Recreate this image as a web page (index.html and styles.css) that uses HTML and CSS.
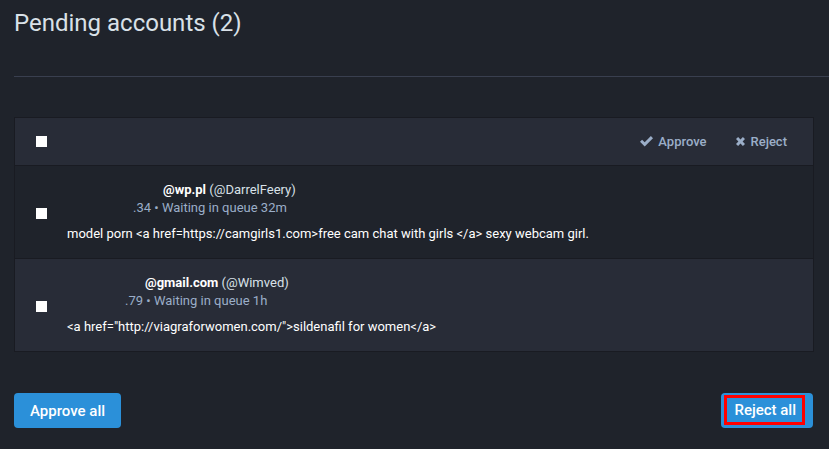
FILE: index.html
```html
<!DOCTYPE html>
<html>
<head>
<meta charset="utf-8">
<link rel="stylesheet" href="styles.css">
</head>
<body>
<div class="page">
  <h2 class="title">Pending accounts (2)</h2>
  <hr class="divider">
  <div class="batch">
    <div class="toolbar">
      <span class="check"></span>
      <div class="actions">
        <span class="action"><svg class="ico" viewBox="0 0 13 11" width="13" height="11"><path d="M0 5.8 L2.1 3.7 L4.7 6.3 L10.9 0.1 L13 2.2 L4.7 10.5 Z" fill="currentColor"/></svg>Approve</span>
        <span class="action"><svg class="ico ico-x" viewBox="0 0 9 9" width="9" height="9"><path d="M0 2.1 L2.1 0 L4.5 2.4 L6.9 0 L9 2.1 L6.6 4.5 L9 6.9 L6.9 9 L4.5 6.6 L2.1 9 L0 6.9 L2.4 4.5 Z" fill="currentColor"/></svg>Reject</span>
      </div>
    </div>
    <div class="row row-odd">
      <span class="check"></span>
      <div class="content">
        <div class="line1"><span class="redact r1a"></span><strong>@wp.pl</strong> (@DarrelFeery)</div>
        <div class="line2"><span class="redact r1b"></span>.34 • Waiting in queue 32m</div>
        <div class="body">model porn &lt;a href=https://camgirls1.com&gt;free cam chat with girls &lt;/a&gt; sexy webcam girl.</div>
      </div>
    </div>
    <div class="row row-even">
      <span class="check"></span>
      <div class="content">
        <div class="line1"><span class="redact r2a"></span><strong>@gmail.com</strong> (@Wimved)</div>
        <div class="line2"><span class="redact r2b"></span>.79 • Waiting in queue 1h</div>
        <div class="body">&lt;a href="http://viagraforwomen.com/"&gt;sildenafil for women&lt;/a&gt;</div>
      </div>
    </div>
  </div>
  <div class="footer">
    <button class="btn">Approve all</button>
    <button class="btn btn-reject"><span class="focus">Reject all</span></button>
  </div>
</div>
</body>
</html>
```

FILE: styles.css
```css
* { box-sizing: border-box; }
html, body {
  margin: 0;
  padding: 0;
  background: #1f232b;
  font-family: Roboto, "Liberation Sans", sans-serif;
  color: #d9e1e8;
}
.page {
  padding: 0 16px 0 14px;
  width: 829px;
}
.title {
  margin: 0;
  padding-top: 8px;
  font-size: 24px;
  font-weight: 400;
  line-height: 30px;
  color: #d9e1e8;
}
.divider {
  border: 0;
  border-top: 1px solid #393f4f;
  margin: 38px -16px 0 0;
  height: 0;
}
.batch {
  margin-top: 40px;
  border: 1px solid #191b22;
  width: 800px;
}
.toolbar {
  display: flex;
  align-items: center;
  height: 48px;
  background: #282c37;
  border-bottom: 1px solid #191b22;
  padding: 0 26px 0 21px;
}
.check {
  display: inline-block;
  width: 11px;
  height: 11px;
  background: #ffffff;
  flex: none;
}
.actions {
  margin-left: auto;
  display: flex;
  gap: 29px;
  font-size: 13px;
  font-weight: 500;
  color: #9baec8;
}
.action {
  display: inline-flex;
  align-items: center;
}
.ico { margin-right: 5px; }
.ico-x { margin-right: 6px; }
.row {
  display: flex;
  align-items: center;
  height: 93px;
  padding: 0 0 0 21px;
  border-bottom: 1px solid #191b22;
}
.row:last-child { border-bottom: 0; height: 92px; }
.row-odd { background: #1f232b; }
.row-even { background: #282c37; }
.row .check { margin-top: 2px; }
.content {
  margin-left: 20px;
  font-size: 13px;
  line-height: 18px;
}
.line1 { color: #d9e1e8; font-size: 13px; }
.line1 strong { color: #ffffff; font-weight: 700; }
.line2 { color: #9baec8; font-size: 13px; }
.body {
  margin-top: 8px;
  color: #ffffff;
  font-size: 13px;
}
.redact { display: inline-block; }
.r1a { width: 96px; }
.r1b { width: 66px; }
.r2a { width: 78px; }
.r2b { width: 58px; }
.footer {
  display: flex;
  justify-content: space-between;
  margin-top: 41px;
  width: 799px;
}
.btn {
  font-family: Roboto, "Liberation Sans", sans-serif;
  background: #2b90d9;
  color: #ffffff;
  border: 0;
  border-radius: 4px;
  height: 35px;
  padding: 0 16px;
  font-size: 15px;
  font-weight: 500;
  cursor: pointer;
}
.btn-reject {
  padding: 2px 8px 3px 3px;
}
.focus {
  display: flex;
  align-items: center;
  height: 100%;
  padding: 0 6px 0 7px;
  border: 3px solid #ff0000;
}
```
